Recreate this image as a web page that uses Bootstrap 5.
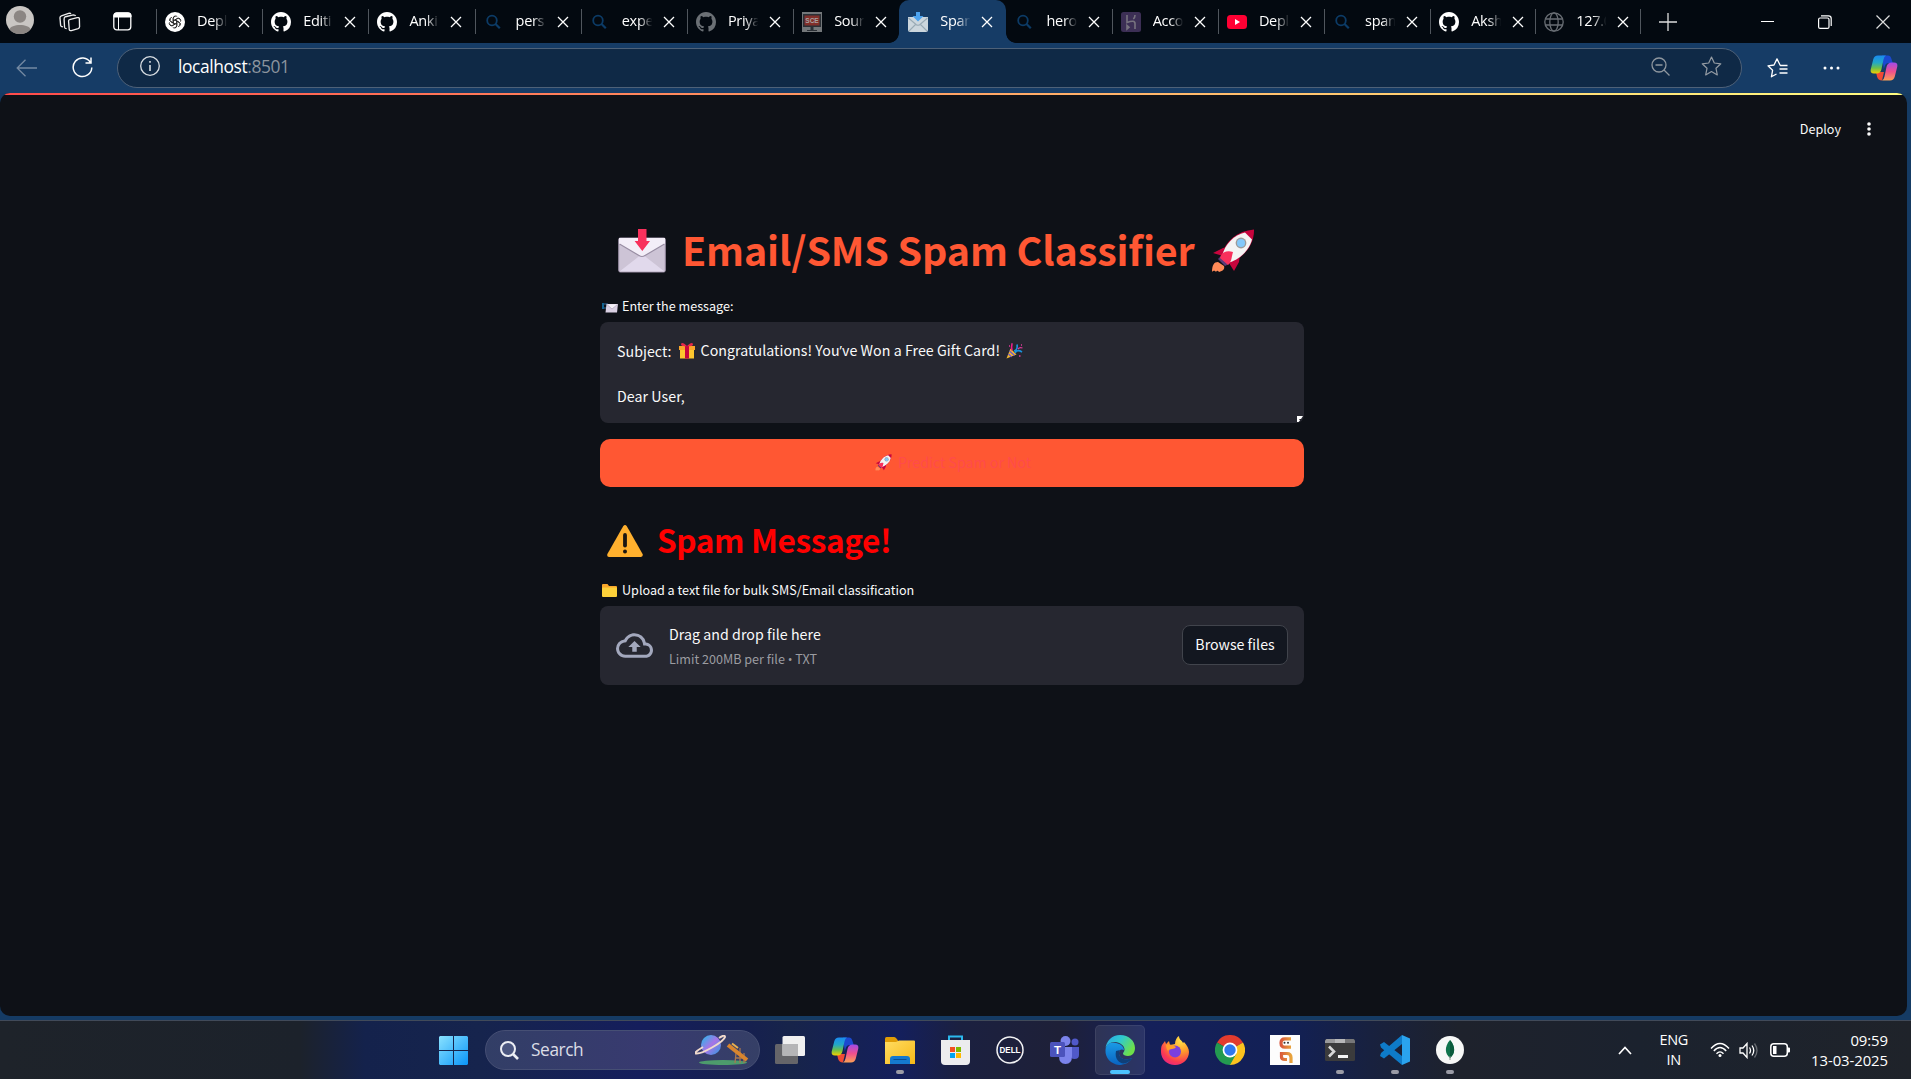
<!DOCTYPE html>
<html lang="en">
<head>
<meta charset="utf-8">
<title>Spam Classifier</title>
<meta name="viewport" content="width=device-width, initial-scale=1">
<link href="https://cdn.jsdelivr.net/npm/bootstrap@5.3.0/dist/css/bootstrap.min.css" rel="stylesheet">
<style>
  html, body { height: 100%; }
  body { background: #153b64; color: #fff; font-family: "Open Sans", "Noto Sans", sans-serif; overflow: hidden; }
  svg { display: block; flex: none; }
  .tabstrip { height: 43px; background: #030910; }
  .strip-lead { width: 156px; padding-left: 6px; }
  .btab { width: 106.2px; height: 43px; flex: none; padding: 1px 0 0 9px; position: relative; }
  .btab::before { content: ""; position: absolute; left: 0; top: 9px; width: 1px; height: 25px; background: #50565d; }
  .btab.bare::before { display: none; }
  .btab.narrow { width: 105px; }
  .btab-title { width: 31px; margin-left: 12px; margin-right: 10px; font-size: 14.5px; letter-spacing: -.3px; line-height: 20px; white-space: nowrap; margin-top: -2px;
    -webkit-mask-image: linear-gradient(90deg, #000 55%, transparent 98%); mask-image: linear-gradient(90deg, #000 55%, transparent 98%); }
  .btab.current { background: #163c66; border-radius: 10px 10px 0 0; }
  .btab.current::before, .btab.current::after { content: ""; position: absolute; display: block; top: auto; bottom: 0; width: 10px; height: 10px; }
  .btab.current::before { left: -10px; background: radial-gradient(circle at 0 0, transparent 9.5px, #163c66 10.2px); }
  .btab.current::after { right: -10px; background: radial-gradient(circle at 100% 0, transparent 9.5px, #163c66 10.2px); }
  .toolbar { height: 50px; background: #163c66; padding-left: 16px; }
  .address { width: 1625px; height: 40px; border: 1px solid #4e6178; border-radius: 20px; background: #0f2946; padding: 0 19px 0 22px; font-size: 17.4px; letter-spacing: -.4px; }
  .address .port { color: #8b949e; }
  .pageview { width: 1907px; height: 923px; background: #0e1117; border-radius: 10px; overflow: hidden; font-family: "Noto Sans CJK SC", sans-serif; color: #fafafa; }
  .latin { font-family: "Open Sans", sans-serif; }
  .rainbow { height: 2px; background: linear-gradient(90deg, #ff4b4b, #fffd80); }
  .apphead { height: 70px; padding-right: 31px; padding-bottom: 2px; font-size: 12.6px; }
  .appcol { width: 704px; margin-left: 600px; padding-top: 60px; }
  .title-main { height: 48px; line-height: 48px; color: #ff5733; font-size: 39.4px; letter-spacing: -.12px; font-weight: 700; margin: 0; padding-left: 18px; white-space: nowrap; }
  .title-result { height: 48px; line-height: 48px; color: #f00; font-size: 31.6px; letter-spacing: -.4px; font-weight: 700; margin: 28px 0 16.5px; padding-left: 7px; white-space: nowrap; }
  .flabel { height: 20px; line-height: 20px; font-size: 12.6px; margin-bottom: 6.5px; padding-left: 2px; white-space: nowrap; }
  .msgbox { height: 101px; background: #262730; border-radius: 8px; padding: 17px 17px; font-size: 14.2px; letter-spacing: .05px; line-height: 22.5px; position: relative; white-space: nowrap; }
  .grip { position: absolute; right: 1px; bottom: 1px; }
  .predict { height: 48px; margin-top: 16px; background: #ff5733; color: #ff4b4b; border: 0; border-radius: 10px; font-size: 14.2px; padding: 0 0 1px 2px; }
  .predict:hover { background: #ff5733; color: #ff4b4b; }
  .dropzone { height: 79px; background: #262730; border-radius: 8px; padding: 0 16px; }
  .dz-main { font-size: 14.2px; letter-spacing: .05px; line-height: 24px; }
  .dz-sub { font-size: 12.6px; line-height: 24px; height: 24px; padding-top: 1px; color: #9b9ca1; white-space: nowrap; }
  .browse { width: 106px; height: 40px; background: #131720; border: 1px solid #41444c; border-radius: 8px; color: #fafafa; font-size: 14.2px; padding: 0; margin-bottom: 1px; }
  .taskbar { height: 59px; border-top: 1px solid #414a59; margin-top: 4px;
    background: linear-gradient(90deg, #1e232a 0, #1c222b 300px, #14224c 365px, #16244d 480px, #151e5c 640px, #16204f 750px, #17244a 790px, #141f5c 900px, #1b2040 960px, #1e2038 1060px, #15205a 1150px, #122055 1290px, #18213f 1370px, #1e222c 1460px, #1b222e 1640px, #1f232a 1911px); }
  .tcell { width: 50px; height: 50px; flex: none; position: relative; }
  .tcell.sel { background: rgba(255,255,255,.09); border: 1px solid rgba(255,255,255,.07); border-radius: 5px; }
  .tcell.run::after { content: ""; position: absolute; left: 21px; bottom: 1px; width: 8px; height: 4px; border-radius: 2px; background: #9a9ba6; }
  .tcell.sel::after { left: 14px; width: 20px; bottom: 0; background: #4cc2ff; }
  .searchpill { width: 275px; height: 40px; border-radius: 20px; background: linear-gradient(90deg, #323e66, #383a70 60%, #353f66); border: 1px solid #464f74; margin: 0 5px 0 7px; padding: 0 10px 0 14px; font-size: 17.3px; color: #dcdde6; letter-spacing: -.4px; }
  .tray { font-size: 14.5px; line-height: 20px; letter-spacing: -.3px; }
  .clock { font-size: 14.9px; letter-spacing: -.08px; margin-left: 21px; }
</style>
</head>
<body>
<svg width="0" height="0" class="position-absolute" aria-hidden="true">
  <defs>
    <linearGradient id="cpA" x1="0" y1="0" x2="0" y2="1"><stop offset="0" stop-color="#1a8af0"/><stop offset=".4" stop-color="#22a8c8"/><stop offset=".7" stop-color="#6cc04a"/><stop offset="1" stop-color="#f5d000"/></linearGradient>
    <linearGradient id="cpB" x1="0" y1="0" x2="0" y2="1"><stop offset="0" stop-color="#a04be8"/><stop offset=".5" stop-color="#ee4f8e"/><stop offset="1" stop-color="#fba055"/></linearGradient>
    <linearGradient id="winG" x1="0" y1="0" x2="1" y2="1"><stop offset="0" stop-color="#8ae2ff"/><stop offset="1" stop-color="#0a95f8"/></linearGradient>
    <linearGradient id="foldG" x1="0" y1="0" x2="1" y2="1"><stop offset="0" stop-color="#ffdc62"/><stop offset="1" stop-color="#f7b917"/></linearGradient>
    <linearGradient id="edA" x1="0" y1="0" x2="1" y2=".5"><stop offset="0" stop-color="#2aa5ea"/><stop offset=".5" stop-color="#2fc9cf"/><stop offset="1" stop-color="#6ee04a"/></linearGradient>
    <linearGradient id="edB" x1="0" y1="0" x2="0" y2="1"><stop offset="0" stop-color="#1a9be6"/><stop offset="1" stop-color="#0a63c0"/></linearGradient>
    <radialGradient id="ffA" cx=".7" cy=".15" r="1"><stop offset="0" stop-color="#ffe34a"/><stop offset=".4" stop-color="#ff9a2a"/><stop offset=".75" stop-color="#fb3a52"/><stop offset="1" stop-color="#e02090"/></radialGradient>
    <linearGradient id="plG" x1="0" y1="0" x2="1" y2="1"><stop offset="0" stop-color="#18c0ea"/><stop offset=".5" stop-color="#a774e6"/><stop offset="1" stop-color="#2a9be0"/></linearGradient>
    <linearGradient id="ucG" x1="0" y1="0" x2="1" y2="0"><stop offset="0" stop-color="#d8563c"/><stop offset="1" stop-color="#e8a33c"/></linearGradient>
    <symbol id="gh" viewBox="0 0 16 16"><path fill="currentColor" d="M8 0C3.58 0 0 3.58 0 8c0 3.54 2.29 6.53 5.47 7.59.4.07.55-.17.55-.38 0-.19-.01-.82-.01-1.49-2.01.37-2.53-.49-2.69-.94-.09-.23-.48-.94-.82-1.13-.28-.15-.68-.52-.01-.53.63-.01 1.08.58 1.23.82.72 1.21 1.87.87 2.33.66.07-.52.28-.87.51-1.07-1.78-.2-3.64-.89-3.64-3.95 0-.87.31-1.59.82-2.15-.08-.2-.36-1.02.08-2.12 0 0 .67-.21 2.2.82.64-.18 1.32-.27 2-.27s1.36.09 2 .27c1.53-1.04 2.2-.82 2.2-.82.44 1.1.16 1.92.08 2.12.51.56.82 1.27.82 2.15 0 3.07-1.87 3.75-3.65 3.95.29.25.54.73.54 1.48 0 1.07-.01 1.93-.01 2.2 0 .21.15.46.55.38A8.01 8.01 0 0 0 16 8c0-4.42-3.58-8-8-8z"/></symbol>
    <symbol id="mag" viewBox="0 0 20 20"><circle cx="8" cy="8.500" r="4.800" fill="none" stroke="#0c3b66" stroke-width="1.800"/><path d="M11.500 12l4.300 4.300" stroke="#0c3b66" stroke-width="2.200"/></symbol>
    <symbol id="cls" viewBox="0 0 12 12"><path d="M1 1l10 10M11 1L1 11" stroke="#fff" stroke-width="1.3" fill="none"/></symbol>
    <symbol id="copilot" viewBox="0 0 28 26">
      <path fill="#ef4a35" d="M6 17h8l-2 8.500q-4 0-5-4z"/>
      <path fill="#1b49d0" d="M12 .5h6q2.500 0 3.300 3l1.500 4.500h-4q-3 0-4 3l-1 3z"/>
      <path fill="url(#cpA)" d="M8 .5h8q-2 1-2.500 4l-2 9.500q-1 4.500-5 4.500H4Q0 18.500 .7 14.500l2.500-10q1-4 4.800-4z"/>
      <path fill="url(#cpB)" d="M20 25.500h-8q2-1 2.500-4l2-9.500q1-4.500 5-4.500H24q4 0 3.300 4l-2.500 10q-1 4-4.800 4z"/>
    </symbol>
    <symbol id="rocket" viewBox="0 0 44 44">
      <path fill="#ff8a57" d="M7 33c-4 0-6 3-6 10 2-2 3-1 4 0 1-2 2-1 3 0 4-1 6-3 5-6z"/>
      <path fill="#c7053d" d="M2 24l10-5 8-2-8 10zM23 42l5-9 1-8-11 9z"/>
      <path fill="#c7053d" d="M10 28C14 12 26 2 43 .5 43.500 17 31 30 17 35z"/>
      <path fill="#f4f4f4" d="M11 27C14 15 23 6 34 3.500L41 10.500C38 22 28 31 17 34z"/>
      <path fill="#5b3b78" d="M10 27l8 8-4 2-7-7z"/>
      <path fill="#f8305c" d="M9 29c1-5 6-8 13-6-2 7-1 9-5 13z"/>
      <circle cx="30" cy="14" r="5.400" fill="#9b9b9b"/><circle cx="30" cy="14" r="4" fill="#83c8fa"/>
    </symbol>
    <symbol id="wcaret" viewBox="0 0 14 9"><path d="M1 8l6-6.500L13 8" fill="none" stroke="#fff" stroke-width="1.700"/></symbol>
  </defs>
</svg>

<div class="d-flex flex-column vh-100">
  <!-- tab strip -->
  <header class="tabstrip d-flex align-items-center">
    <div class="strip-lead d-flex align-items-center">
      <svg class="mb-1" width="28" height="28" viewBox="0 0 28 28"><circle cx="14" cy="14" r="14" fill="#c9c6c3"/><circle cx="14" cy="10.500" r="6.200" fill="#8b8683"/><path fill="#8b8683" d="M3.500 23.500c1-6 20-6 21 0a14 14 0 0 1-21 0z"/></svg>
      <svg style="margin-left:25px" width="22" height="22" viewBox="0 0 23 22" fill="none" stroke="#eee" stroke-width="1.400"><path d="M11 8.500l8-2q2-.5 2.300 1l.2 8.500q0 1.500-1.500 2L13 20q-2 .4-2.300-1.300L10 10q0-1.300 1-1.500z"/><path d="M8 18q-2 0-2.200-1.500L5.300 8q0-2 1.500-2.500L15 3.500q2 0 2.300 1.200"/><path d="M4 16q-2 0-2.300-1.500L1 6.500Q1 5 2.500 4.500L10 2q2-.4 2.400.6"/></svg>
      <svg style="margin-left:32px" width="19" height="19" viewBox="0 0 19 19"><rect x=".8" y=".8" width="17" height="17" rx="3" fill="none" stroke="#fff" stroke-width="1.300"/><path d="M1 5V3.500Q1 1 3.500 1h12Q18 1 18 3.500V5zM5.500 5v13" stroke="#fff" fill="#fff"/></svg>
    </div>
    <div class="btab d-flex align-items-center">
      <svg width="20" height="20" viewBox="0 0 20 20"><circle cx="10" cy="10" r="10" fill="#fff"/><g fill="none" stroke="#222" stroke-width=".85"><g id="knot"><path d="M8.200 11V6.300a2.300 2.300 0 0 1 4.200-1.300M8.200 8.900l3.900-2.200a2.300 2.300 0 0 1 3 .7"/></g><use href="#knot" transform="rotate(60 10 10)"/><use href="#knot" transform="rotate(120 10 10)"/><use href="#knot" transform="rotate(180 10 10)"/><use href="#knot" transform="rotate(240 10 10)"/><use href="#knot" transform="rotate(300 10 10)"/></g></svg>
      <div class="btab-title">Depl</div><svg width="12" height="12"><use href="#cls"/></svg></div>
    <div class="btab d-flex align-items-center"><svg width="20" height="20"><use href="#gh"/></svg><div class="btab-title">Editi</div><svg width="12" height="12"><use href="#cls"/></svg></div>
    <div class="btab d-flex align-items-center"><svg width="20" height="20"><use href="#gh"/></svg><div class="btab-title">Anki</div><svg width="12" height="12"><use href="#cls"/></svg></div>
    <div class="btab d-flex align-items-center"><svg width="20" height="20"><use href="#mag"/></svg><div class="btab-title">pers</div><svg width="12" height="12"><use href="#cls"/></svg></div>
    <div class="btab d-flex align-items-center"><svg width="20" height="20"><use href="#mag"/></svg><div class="btab-title">expe</div><svg width="12" height="12"><use href="#cls"/></svg></div>
    <div class="btab d-flex align-items-center"><svg width="20" height="20" color="#6b7075"><use href="#gh"/></svg><div class="btab-title">Priya</div><svg width="12" height="12"><use href="#cls"/></svg></div>
    <div class="btab d-flex align-items-center"><svg width="20" height="20" viewBox="0 0 20 20"><path fill="#73777a" d="M0 0h20v20H0z"/><path fill="#2b3036" d="M1 2h18v13H1zM8.500 15h3v3h-3zM5 18h10v1H5z"/><path fill="#822f2a" d="M2.500 3.500h15v10h-15z"/><text x="10" y="11" text-anchor="middle" font-family="Liberation Sans" font-weight="700" font-size="6.500" fill="#a8a3a3">SCE</text></svg><div class="btab-title">Sour</div><svg width="12" height="12"><use href="#cls"/></svg></div>
    <div class="btab current d-flex align-items-center"><svg width="20" height="20" viewBox="0 0 20 20"><path fill="#ccd6dd" d="M0 5h20v13q0 2-2 2H2q-2 0-2-2z"/><path d="M1 19l6.500-6.500M19 19l-6.500-6.500M.5 6L8 12.500q2 1.500 4 0L19.500 6" fill="none" stroke="#99aab5" stroke-width="1.100"/><path fill="#4da3ee" d="M8 0h4v4h3.500L10 9.500 4.500 4H8z"/></svg><div class="btab-title">Spam</div><svg width="12" height="12"><use href="#cls"/></svg></div>
    <div class="btab bare d-flex align-items-center"><svg width="20" height="20"><use href="#mag"/></svg><div class="btab-title">hero</div><svg width="12" height="12"><use href="#cls"/></svg></div>
    <div class="btab d-flex align-items-center"><svg width="20" height="20" viewBox="0 0 20 20"><rect width="20" height="20" rx="2.500" fill="#3c2f55"/><path d="M6 3v7.500q8-3 8 1V17M14 3q0 2.500-1.700 4M6 13.500v3.500l2-1.800z" fill="none" stroke="#77737f" stroke-width="1.600"/></svg><div class="btab-title">Acco</div><svg width="12" height="12"><use href="#cls"/></svg></div>
    <div class="btab d-flex align-items-center"><svg width="20" height="20" viewBox="0 0 20 20"><rect y="3" width="20" height="14" rx="3.500" fill="#ff0033"/><path fill="#fff" d="M8 7v6l5-3z"/></svg><div class="btab-title">Depl</div><svg width="12" height="12"><use href="#cls"/></svg></div>
    <div class="btab d-flex align-items-center"><svg width="20" height="20"><use href="#mag"/></svg><div class="btab-title">spam</div><svg width="12" height="12"><use href="#cls"/></svg></div>
    <div class="btab narrow d-flex align-items-center"><svg width="20" height="20"><use href="#gh"/></svg><div class="btab-title">Aksh</div><svg width="12" height="12"><use href="#cls"/></svg></div>
    <div class="btab narrow d-flex align-items-center"><svg width="20" height="20" viewBox="0 0 20 20" fill="none" stroke="#696e74" stroke-width="1.300"><circle cx="10" cy="10" r="9.200"/><ellipse cx="10" cy="10" rx="4.200" ry="9.200"/><path d="M1.500 7h17M1.500 13h17"/></svg><div class="btab-title">127.0</div><svg width="12" height="12"><use href="#cls"/></svg></div>
    <div class="btab flex-fill d-flex align-items-center justify-content-between" style="padding:0 21px 0 19px">
      <svg width="18" height="18" viewBox="0 0 18 18"><path d="M9 0v18M0 9h18" stroke="#ddd" stroke-width="1.300"/></svg>
      <div class="d-flex align-items-center">
        <svg width="13" height="13" viewBox="0 0 13 13"><path d="M0 6.500h13" stroke="#fff"/></svg>
        <svg style="margin:0 44px" width="14" height="14" viewBox="0 0 14 14" fill="none" stroke="#fff" stroke-width="1.200"><rect x=".6" y="3" width="10.400" height="10.400" rx="1.500"/><path d="M3 .8h7.500q2.700 0 2.700 2.700V11"/></svg>
        <svg width="14" height="14" viewBox="0 0 14 14"><path d="M.5.5l13 13M13.500.5l-13 13" stroke="#ddd" stroke-width="1.200"/></svg>
      </div>
    </div>
  </header>

  <!-- toolbar -->
  <nav class="toolbar d-flex align-items-center">
    <svg style="margin-bottom:1px" width="21" height="18" viewBox="0 0 21 18"><path d="M9.500.8L1.200 9l8.300 8.200M1.200 9H21" fill="none" stroke="#7489a2" stroke-width="1.300"/></svg>
    <svg style="margin:0 24px 1px 35px" width="21" height="21" viewBox="0 0 21 21"><path d="M18.500 5.500A9.300 9.300 0 1 0 19.800 10.500M19 .5v5.500h-5.500" fill="none" stroke="#fff" stroke-width="1.500"/></svg>
    <div class="address d-flex align-items-center pb-1">
      <svg width="20" height="20" viewBox="0 0 20 20"><circle cx="10" cy="10" r="9.300" fill="none" stroke="#d8dde2" stroke-width="1.300"/><path d="M10 9v6M10 5v1.800" stroke="#d8dde2" stroke-width="1.600"/></svg>
      <div style="margin-left:18px">localhost<span class="port">:8501</span></div>
      <svg class="ms-auto" width="19" height="19" viewBox="0 0 19 19" fill="none" stroke="#8f979f" stroke-width="1.300"><circle cx="8" cy="8" r="7"/><path d="M13 13l5.500 5.500M4.500 8h7"/></svg>
      <svg style="margin-left:31px" width="21" height="20" viewBox="0 0 21 20"><path d="M10.500 1l2.800 6 6.500.8-4.800 4.500 1.300 6.600-5.800-3.300-5.800 3.300L6 12.300 1.200 7.800 7.700 7z" fill="none" stroke="#949ba3" stroke-width="1.200" stroke-linejoin="round"/></svg>
    </div>
    <svg style="margin-left:25px" width="21" height="20" viewBox="0 0 21 20"><path d="M19 7.500h-5.700L10 .9 7 7 1 7.800l4.600 4.500-1.200 6.500L9.500 16M12.500 11h8M12.500 15h8M15 7.500h5.500" fill="none" stroke="#fff" stroke-width="1.300" stroke-linejoin="round"/></svg>
    <svg style="margin:0 30px 0 35px" width="17" height="4" viewBox="0 0 17 4" fill="#fff"><circle cx="2" cy="2" r="1.500"/><circle cx="8.500" cy="2" r="1.500"/><circle cx="15" cy="2" r="1.500"/></svg>
    <svg width="28" height="26"><use href="#copilot"/></svg>
  </nav>

  <!-- application page -->
  <main class="pageview">
    <div class="rainbow"></div>
    <div class="apphead d-flex align-items-center justify-content-end"><span>Deploy</span>
      <svg style="margin:0 4px 0 25px" width="6" height="16" viewBox="0 0 6 16" fill="#fafafa"><circle cx="3" cy="3" r="1.800"/><circle cx="3" cy="8" r="1.800"/><circle cx="3" cy="13" r="1.800"/></svg></div>
    <div class="appcol">
      <h1 class="title-main d-flex align-items-center">
        <svg class="mt-1" width="48" height="44" viewBox="0 0 48 44"><rect x=".7" y="9" width="46.600" height="34" rx="1.500" fill="#cdc4d6" stroke="#998ea4"/><path fill="#e1d9ec" d="M1.500 42.500L24 25l22.500 17.500z"/><path fill="#f3eef8" d="M1 9h46v6L27 26.500q-3 2-6 0L1 15z"/><path d="M1.500 15L21 26.500q3 2 6 0L46.500 15" fill="none" stroke="#998ea4" stroke-width="1.200"/><path fill="#f8305c" d="M20 0h8.500v12H32l-7.700 10-7.700-10H20z"/></svg>
        <span style="margin-left:16px;margin-right:16px">Email/SMS Spam Classifier</span>
        <svg class="mt-1" width="44" height="44"><use href="#rocket"/></svg>
      </h1>
      <div class="flabel d-flex align-items-center" style="margin-top:22.500px">
        <svg style="margin-top:4px" width="16" height="11" viewBox="0 0 16 11"><path fill="#12628f" d="M0 1h2v6H0z"/><path fill="#213f5c" d="M2 1h4v2H2zM2 5h2v2H2z"/><path fill="#d9d0e3" d="M4.500 2H16l-1 8.500H3.500z"/><path d="M4.800 2.300L10 7l5.700-4.700" fill="#f5f1f9" stroke="#a79bb3" stroke-width=".6"/></svg>
        <span style="margin-left:4px">Enter the message:</span></div>
      <div class="msgbox">
        <div class="d-flex align-items-center"><span>Subject:</span>
          <svg style="margin:0 6px 0 7px" width="16" height="17" viewBox="0 0 16 17"><path fill="#fcc62e" d="M1 7h14v9.500H1z"/><path fill="#f9a52a" d="M0 4h16v4H0z"/><path fill="#c7053d" d="M6 4h4v12.500H6z"/><path fill="#e8284a" d="M8 4Q2 5 2 2q1-3 6 2 5-5 6-2 0 3-6 2z"/></svg>
          <span>Congratulations! You<span class="latin">’</span>ve Won a Free Gift Card!</span>
          <svg style="margin-left:6px" width="17" height="16" viewBox="0 0 17 16"><path fill="#f7b82d" d="M4.500 5.500L.5 15.500l10-4z"/><path d="M3.500 8l5 4.500M2.500 11l3 3" stroke="#6a5bd0" stroke-width="1.300"/><path d="M6 7.500q-1-3 0-6.500" stroke="#f01a8a" stroke-width="1.600" fill="none"/><path d="M8 8q4-1 3-6.500M9 10q2-4 7-1" stroke="#1a92dc" stroke-width="1.700" fill="none"/><path d="M12 6q1.500-2 4.500-1M3 3h1M13 13h1.500M5.500 .5h1M15 2h1" stroke="#e0389a" stroke-width="1.300" fill="none"/></svg></div>
        <div>&nbsp;</div>
        <div>Dear User,</div>
        <svg class="grip" width="6" height="6" viewBox="0 0 6 6"><path fill="#fff" d="M0 0h6L4 3 2 3 3 4.500 1.500 6H0z"/></svg>
      </div>
      <button type="button" class="predict btn w-100 d-flex align-items-center justify-content-center">
        <svg width="17" height="17"><use href="#rocket"/></svg><span style="margin-left:6px">Predict Spam or Not</span></button>
      <h2 class="title-result d-flex align-items-center">
        <svg class="mt-1" width="36" height="32" viewBox="0 0 36 32"><path fill="#ffb02e" d="M16.300 1q1.700-2 3.400 0L35.600 29q.8 2.500-1.600 3H2q-2.400-.5-1.600-3z"/><path d="M18 10v10.500" stroke="#1a1612" stroke-width="3.800" stroke-linecap="round"/><circle cx="18" cy="26.500" r="2" fill="#1a1612"/></svg>
        <span style="margin-left:14px">Spam Message!</span></h2>
      <div class="flabel d-flex align-items-center">
        <svg style="margin-top:2px" width="15" height="13" viewBox="0 0 15 13"><path fill="#f9a72b" d="M0 1q0-1 1-1h4.500l1.500 2h7q1 0 1 1v5H0z"/><rect y="3.500" width="15" height="9.500" rx="1" fill="#fdd13a"/></svg>
        <span style="margin-left:5px">Upload a text file for bulk SMS/Email classification</span></div>
      <div class="dropzone d-flex align-items-center">
        <svg width="37" height="37" viewBox="0 0 24 24"><path fill="#a3a8bd" d="M19.350 10.040A7.490 7.490 0 0012 4C9.110 4 6.600 5.640 5.350 8.040A5.994 5.994 0 000 14c0 3.310 2.690 6 6 6h13c2.760 0 5-2.240 5-5 0-2.640-2.050-4.780-4.650-4.960zM19 18H6c-2.210 0-4-1.790-4-4 0-2.050 1.530-3.760 3.560-3.970l1.070-.11.5-.95A5.469 5.469 0 0112 6c2.620 0 4.880 1.860 5.390 4.430l.3 1.500 1.530.11A2.980 2.980 0 0122 15c0 1.650-1.350 3-3 3zM8 13h2.550v3h2.900v-3H16l-4-4z"/></svg>
        <div style="margin-left:16px"><div class="dz-main">Drag and drop file here</div><div class="dz-sub">Limit 200MB per file <span class="latin">•</span> TXT</div></div>
        <button type="button" class="browse btn ms-auto">Browse files</button>
      </div>
    </div>
  </main>

  <!-- taskbar -->
  <footer class="taskbar d-flex align-items-center">
    <div class="tcell d-flex align-items-center justify-content-center" style="margin-left:428px"><svg width="29" height="29" viewBox="0 0 29 29" fill="url(#winG)"><path d="M1 0h13v14H0V1zM15 0h13l1 1v13H15zM0 15h14v14H1l-1-1zM15 15h14v13l-1 1H15z"/></svg></div>
    <div class="searchpill d-flex align-items-center">
      <svg width="19" height="19" viewBox="0 0 19 19" fill="none" stroke="#eceef4"><circle cx="8" cy="8" r="7" stroke-width="2" fill="#4b5680"/><path d="M13 13l5 5" stroke-width="2.600"/></svg>
      <span style="margin-left:12px">Search</span>
      <svg class="ms-auto" width="54" height="30" viewBox="0 0 54 30"><ellipse cx="28" cy="27.500" rx="24" ry="2.500" fill="#4d9b6c"/><circle cx="16" cy="10" r="10" fill="url(#plG)"/><path d="M8 12Q-2 18 1 18.500q4 .8 16-6T30 2q0-3-6 1" fill="none" stroke="#efd9cc" stroke-width="2"/><path d="M45 13v15M41 18l-1 10M49 18v10M40 23h9" stroke="#a8764f" stroke-width="1.300"/><path d="M33 10l19 15" stroke="#d8852e" stroke-width="4"/><path d="M37 8.500l6 4.500" stroke="#e8b04e" stroke-width="2"/></svg>
    </div>
    <div class="d-flex" style="gap:5px">
      <div class="tcell d-flex align-items-center justify-content-center"><svg width="30" height="28" viewBox="0 0 30 28"><rect y="8" width="23" height="20" rx="1.500" fill="#656569"/><rect x="7.500" width="22.500" height="20" rx="1.500" fill="#f0f0f0"/><path fill="#b5b5b7" d="M7.500 8H23v12H7.500z"/></svg></div>
      <div class="tcell d-flex align-items-center justify-content-center"><svg width="28" height="26"><use href="#copilot"/></svg></div>
      <div class="tcell run d-flex align-items-center justify-content-center"><svg width="30" height="27" viewBox="0 0 30 27"><path fill="#e09c05" d="M0 1.500Q0 0 1.500 0H9q1 0 2 1l2 2.500V8H0z"/><path fill="url(#foldG)" d="M0 5h11l3-1.500h15q1 0 1 1V27H0z"/><path fill="#1579cf" d="M5 27v-5q0-3 3-3h14q3 0 3 3v5z"/><path d="M8.500 22.500h13" stroke="#0a4f94"/></svg></div>
      <div class="tcell d-flex align-items-center justify-content-center"><svg width="29" height="30" viewBox="0 0 29 30"><path d="M8 6V1.500h13V6" fill="none" stroke="#2bb8ee" stroke-width="2"/><path fill="#ececee" d="M0 5h29v21q0 4-4 4H4q-4 0-4-4z"/><path fill="#f25022" d="M9 12h5v5H9z"/><path fill="#7fba00" d="M15 12h5v5h-5z"/><path fill="#00a4ef" d="M9 18h5v5H9z"/><path fill="#ffb900" d="M15 18h5v5h-5z"/></svg></div>
      <div class="tcell d-flex align-items-center justify-content-center"><svg width="28" height="28" viewBox="0 0 28 28"><circle cx="14" cy="14" r="13" fill="none" stroke="#f2f2f4" stroke-width="1.500"/><text x="14" y="17.300" text-anchor="middle" textLength="21" lengthAdjust="spacingAndGlyphs" font-family="Liberation Sans" font-weight="700" font-size="9" fill="#fff">DELL</text></svg></div>
      <div class="tcell d-flex align-items-center justify-content-center"><svg width="30" height="28" viewBox="0 0 30 28"><circle cx="25" cy="6" r="3.500" fill="#5059c9"/><path fill="#5059c9" d="M20 11h9v8q0 4-4.500 4T20 19z"/><circle cx="15.500" cy="5" r="5" fill="#7b83eb"/><path fill="#7b83eb" d="M9 11h13v9q0 8-6.500 8T9 20z"/><rect y="6" width="15" height="15" rx="1.500" fill="#4b53bc"/><text x="7.500" y="17.600" text-anchor="middle" font-family="Liberation Sans" font-weight="700" font-size="11.500" fill="#fff">T</text></svg></div>
      <div class="tcell run sel d-flex align-items-center justify-content-center"><svg width="30" height="30" viewBox="0 0 30 30"><path fill="url(#edB)" d="M.5 15C1 8 7 7 11 8c5 1 8 4 8 7-2-1-5-1-5 3 0 6 7 8 13 5-3 5-8 7-13 7C6 29 0 23 .5 15z"/><path fill="#103f78" d="M11 16c-2 9 5 14 10 12 3-1 5-3 6-5-6 3-13 1-13-5 0-2 1-3 1-3z"/><path fill="url(#edA)" d="M.5 14C1 6 7 0 15 0c9 0 15 6 15 13 0 5-3 8-7 8-3 0-5-1-5-2.500 0-1 1.500-1.500 1.500-4C19.500 11 15 7 10 7 5 7 1 10 .5 14z"/></svg></div>
      <div class="tcell d-flex align-items-center justify-content-center"><svg width="28" height="29" viewBox="0 0 28 29"><path fill="url(#ffA)" d="M1 9l3-4 1 3 3-3 1 4 5-1c0-4 2-7 4-8 0 4 3 4 4 7l1-1c3 3 5 7 5 10 0 7-6 13-14 13S0 23 0 16c0-3 0-5 1-7z"/><circle cx="14" cy="15.500" r="6" fill="#7a3fe0"/><path fill="#ff9d2b" d="M5 9c4-1 7 0 10 2-2 3-6 1-8 4-1-1-2-4-2-6z"/></svg></div>
      <div class="tcell d-flex align-items-center justify-content-center"><svg width="30" height="30" viewBox="0 0 30 30"><path fill="#e33b2e" d="M15 15L2 7.500a15 15 0 0 1 26 0z"/><path fill="#fcc31e" d="M15 15l13-7.500A15 15 0 0 1 15 30z"/><path fill="#239a50" d="M15 15v15A15 15 0 0 1 2 7.500z"/><path fill="#239a50" d="M2 7.500l7 12 6 3-1 7.500h1l6.500-11.500L9 18z"/><path fill="#e33b2e" d="M15 7.500h13L15 9z"/><circle cx="15" cy="15" r="7.400" fill="#fff"/><circle cx="15" cy="15" r="5.700" fill="#3078ee"/></svg></div>
      <div class="tcell d-flex align-items-center justify-content-center"><svg width="30" height="30" viewBox="0 0 30 30"><path fill="#fdfdfd" d="M0 0h30v30H0z"/><g fill="none" stroke="url(#ucG)" stroke-width="3.200"><path d="M21 3.800h-6q-4 0-4 4.200t4 4.200h6"/><path d="M10 18.500h7q4 0 4 4V28M11.500 17v5q0 2.500 3.500 2.500h2"/></g><circle cx="14.500" cy="7.800" r="1" fill="#333"/><circle cx="18" cy="7.800" r="1" fill="#333"/></svg></div>
      <div class="tcell run d-flex align-items-center justify-content-center"><svg width="30" height="22" viewBox="0 0 30 22"><rect width="30" height="22" rx="1.500" fill="#3b3b3c"/><path fill="#99999b" d="M1.500 0H10v4H0V1.500z"/><path fill="#b7b7b8" d="M10 0h10v4H10z"/><path fill="#777779" d="M20 0h8.500L30 1.500V4H20z"/><path d="M4 7.500l5 5-5 5" fill="none" stroke="#d8d8d8" stroke-width="2.600"/><path d="M13 17.500h10" stroke="#f4f4f4" stroke-width="3"/></svg></div>
      <div class="tcell run d-flex align-items-center justify-content-center"><svg width="30" height="30" viewBox="0 0 30 30"><path fill="#0e7bc9" d="M22 0v9L4 23.500 0 21l1-3zM0 9.500L4 7l18 14v9L1 12.500z"/><path fill="#2aa3ee" d="M22 0l8 3.500v23L22 30z"/></svg></div>
      <div class="tcell run d-flex align-items-center justify-content-center"><svg width="28" height="28" viewBox="0 0 28 28"><circle cx="14" cy="14" r="14" fill="#f7f8f7"/><path fill="#10744d" d="M14 4c6 7 5 14 0 18-5-4-6-11 0-18z"/><path fill="#0a5a3b" d="M14 4c6 7 5 14 0 18z"/><path d="M14 20v4" stroke="#7e8f86"/></svg></div>
    </div>
    <div class="tray d-flex align-items-center ms-auto" style="padding-right:23px">
      <svg width="14" height="9"><use href="#wcaret"/></svg>
      <div class="text-center" style="margin:0 22px 0 27px">ENG<br>IN</div>
      <svg width="20" height="16" viewBox="0 0 20 16" fill="none" stroke="#fff" stroke-width="1.400"><path d="M1 6.500Q10-3.500 19 6.500M3.800 9Q10 2 16.200 9M6.500 11.700Q10 8 13.500 11.700"/><circle cx="10" cy="13.500" r="1.500" fill="#fff" stroke="none"/></svg>
      <svg style="margin:0 11px 0 9px" width="20" height="17" viewBox="0 0 20 17" fill="none" stroke="#fff" stroke-width="1.300"><path d="M1 6h3l4-4.500v14L4 11H1zM10.500 5.500q2 3 0 6M13 3.500q3.500 5 0 10"/><path d="M15.500 1.500q5 7 0 14" stroke="#686c72"/></svg>
      <svg width="20" height="14" viewBox="0 0 20 14"><rect x=".8" y=".8" width="16.500" height="12.400" rx="3" fill="none" stroke="#fff" stroke-width="1.500"/><path fill="#fff" d="M3 3h3.500v8H3zM18 4.500h1q1 0 1 1v3q0 1-1 1h-1z"/></svg>
      <div class="clock text-end">09:59<br>13-03-2025</div>
    </div>
  </footer>
</div>
<script src="https://cdn.jsdelivr.net/npm/bootstrap@5.3.0/dist/js/bootstrap.bundle.min.js"></script>
</body>
</html>
